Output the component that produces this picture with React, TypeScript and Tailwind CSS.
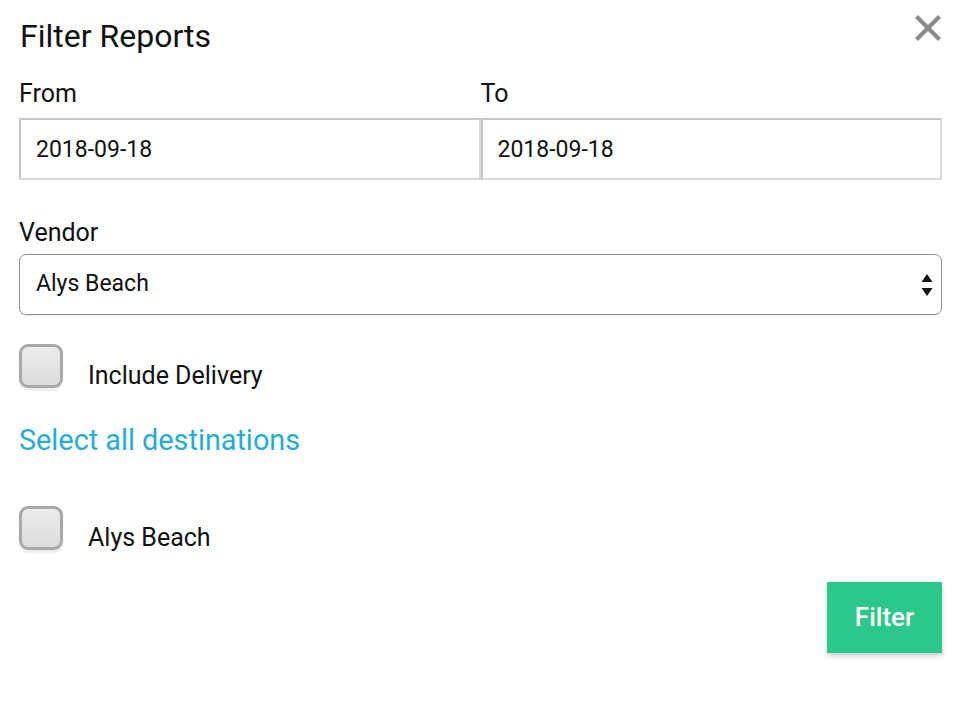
import React from 'react'

function Checkbox() {
  return (
    <div className="w-[44px] h-[44px] shrink-0 rounded-[9px] border-[3px] border-[#a9a9a9] bg-gradient-to-b from-[#ececec] to-[#dcdcdc] shadow-[0_3px_2px_rgba(0,0,0,0.08)]" />
  )
}

function DateInput({ label, value }: { label: string; value: string }) {
  return (
    <div className="flex-1 flex flex-col">
      <label className="text-[25px] leading-[28px] text-[#111] mb-[10px]">{label}</label>
      <div className="h-[62px] flex items-center px-[15px] pt-[2px] border-2 border-[#d8d8d8] border-t-[#c6c6c6] border-l-[#c6c6c6] text-[23px] text-[#111] bg-white">
        {value}
      </div>
    </div>
  )
}

export default function App() {
  return (
    <div
      className="w-[970px] h-[722px] bg-white pl-[19px] pr-[28px] pt-[18px]"
      style={{ fontFamily: 'Roboto, "Liberation Sans", sans-serif' }}
    >
      {/* header */}
      <div className="flex justify-between items-start">
        <h1 className="text-[32px] leading-[36px] text-[#111] pl-[1px]">Filter Reports</h1>
        <button className="mt-[-3px] mr-[1px] text-[#8a8a8a]" aria-label="Close">
          <svg viewBox="0 0 26 26" className="w-[26px] h-[26px]" fill="none" stroke="currentColor" strokeWidth={4.2} strokeLinecap="square">
            <path d="M3 3 L23 23 M23 3 L3 23" />
          </svg>
        </button>
      </div>

      {/* dates */}
      <div className="flex mt-[26px]">
        <DateInput label="From" value="2018-09-18" />
        <DateInput label="To" value="2018-09-18" />
      </div>

      {/* vendor */}
      <label className="block mt-[39px] mb-[7px] text-[25px] leading-[28px] text-[#111]">Vendor</label>
      <div className="h-[61px] flex items-center justify-between pl-[16px] pr-[8px] border-[1.5px] border-[#8f8f8f] rounded-[7px] text-[23px] text-[#111] shadow-[0_1px_1px_rgba(0,0,0,0.08)]">
        <span>Alys Beach</span>
        <svg viewBox="0 0 12 24" className="w-[12px] h-[24px]" fill="#111">
          <path d="M6 1 L11.5 9 L0.5 9 Z" />
          <path d="M0.5 15 L11.5 15 L6 23 Z" />
        </svg>
      </div>

      {/* include delivery */}
      <div className="flex items-start mt-[29px]">
        <Checkbox />
        <span className="ml-[25px] pt-[18px] text-[25px] leading-[28px] text-[#111]">Include Delivery</span>
      </div>

      {/* select all */}
      <div className="mt-[34px] text-[28.8px] leading-[32px] text-[#22aed6]">Select all destinations</div>

      {/* destinations */}
      <div className="flex items-start mt-[50px]">
        <Checkbox />
        <span className="ml-[25px] pt-[18px] text-[25px] leading-[28px] text-[#111]">Alys Beach</span>
      </div>

      {/* actions */}
      <div className="flex justify-end mt-[30px]">
        <button className="w-[115px] h-[71px] bg-[#2ac88a] text-white text-[26px] font-medium shadow-[0_3px_5px_rgba(0,0,0,0.2)]">
          Filter
        </button>
      </div>
    </div>
  )
}
